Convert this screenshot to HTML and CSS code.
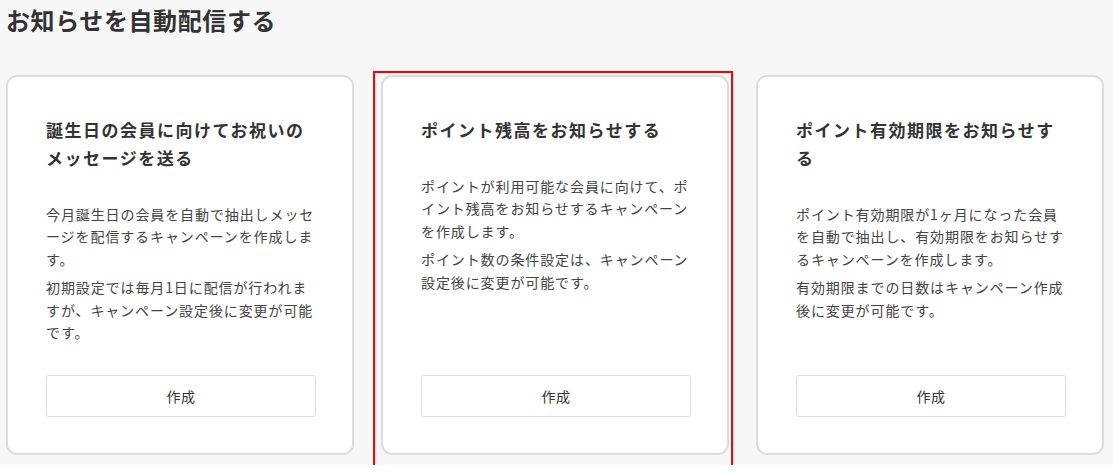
FILE: index.html
```html
<!DOCTYPE html>
<html lang="ja">

<head>
    <meta charset="UTF-8">
    <title>お知らせを自動配信する</title>
    <link rel="stylesheet" href="styles.css">
</head>

<body>
    <div id="page">
        <h1 class="page-title">お知らせを自動配信する</h1>

        <div class="card-list">
            <div class="card">
                <h2 class="card-title">誕生日の会員に向けてお祝いのメッセージを送る</h2>
                <p class="card-text">今月誕生日の会員を自動で抽出しメッセージを配信するキャンペーンを作成します。</p>
                <p class="card-text">初期設定では毎月1日に配信が行われますが、キャンペーン設定後に変更が可能です。</p>
                <button class="create-btn" type="button">作成</button>
            </div>

            <div class="card selected">
                <h2 class="card-title">ポイント残高をお知らせする</h2>
                <p class="card-text">ポイントが利用可能な会員に向けて、ポイント残高をお知らせするキャンペーンを作成します。</p>
                <p class="card-text">ポイント数の条件設定は、キャンペーン設定後に変更が可能です。</p>
                <button class="create-btn" type="button">作成</button>
                <!-- 選択中の枠 -->
                <div class="select-frame"></div>
            </div>

            <div class="card">
                <h2 class="card-title">ポイント有効期限をお知らせする</h2>
                <p class="card-text">ポイント有効期限が1ヶ月になった会員を自動で抽出し、有効期限をお知らせするキャンペーンを作成します。</p>
                <p class="card-text">有効期限までの日数はキャンペーン作成後に変更が可能です。</p>
                <button class="create-btn" type="button">作成</button>
            </div>
        </div>
    </div>
</body>

</html>
```

FILE: styles.css
```css
* {
    margin: 0;
    padding: 0;
    box-sizing: border-box;
}

body {
    background-color: #fff;
    font-family: "Noto Sans CJK JP", "Noto Sans", sans-serif;
    color: #333;
}

#page {
    height: 465px;
    padding: 0 6px;
    background-color: #f7f7f7;
}

.page-title {
    font-size: 24px;
    font-weight: bold;
    line-height: 40px;
    letter-spacing: 0.6px;
    color: #333;
}

.card-list {
    display: grid;
    grid-template-columns: repeat(3, 348px);
    column-gap: 27px;
    margin-top: 35px;
}

.card {
    position: relative;
    display: flex;
    flex-direction: column;
    height: 380px;
    padding: 39px 36px 36px 38px;
    background-color: #fff;
    border: 2px solid #dcdcdc;
    border-radius: 11px;
}

.card-title {
    font-size: 17px;
    font-weight: bold;
    line-height: 28px;
    letter-spacing: 1.5px;
    color: #333;
    margin-bottom: 31px;
}

.card-text {
    font-size: 14px;
    line-height: 22.4px;
    letter-spacing: 0.9px;
    color: #444;
}

.card-text + .card-text {
    margin-top: 6px;
}

.create-btn {
    margin-top: auto;
    width: 100%;
    height: 42px;
    background-color: #fff;
    border: 1px solid #ddd;
    border-radius: 3px;
    font-family: inherit;
    font-size: 14px;
    letter-spacing: 0.5px;
    color: #333;
}

.select-frame {
    position: absolute;
    left: -10px;
    top: -6px;
    right: -6px;
    bottom: -14px;
    border: 2px solid #f00;
    pointer-events: none;
}
```
